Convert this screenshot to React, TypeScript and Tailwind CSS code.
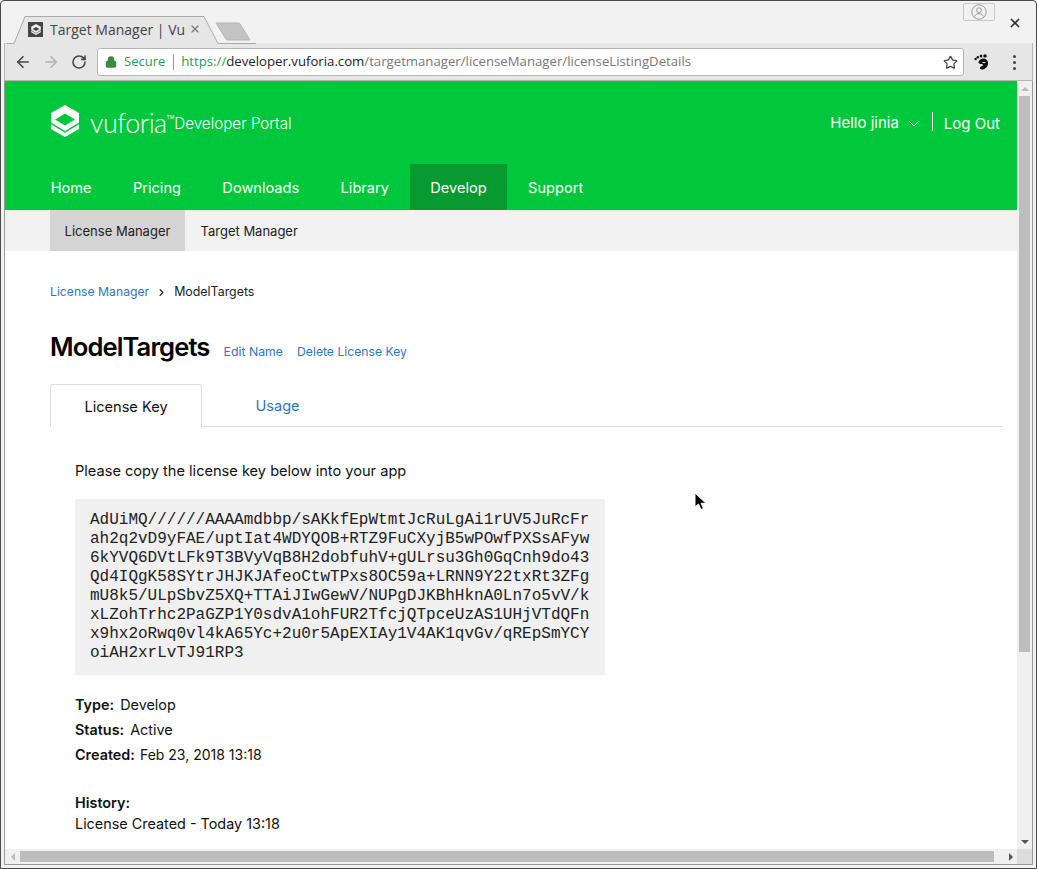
import React from 'react';
import { ArrowLeft, ArrowRight, RotateCw, Lock, Star, X, ChevronDown, ChevronRight } from 'lucide-react';

const LICENSE_KEY = [
  'AdUiMQ//////AAAAmdbbp/sAKkfEpWtmtJcRuLgAi1rUV5JuRcFr',
  'ah2q2vD9yFAE/uptIat4WDYQOB+RTZ9FuCXyjB5wPOwfPXSsAFyw',
  '6kYVQ6DVtLFk9T3BVyVqB8H2dobfuhV+gULrsu3Gh0GqCnh9do43',
  'Qd4IQgK58SYtrJHJKJAfeoCtwTPxs8OC59a+LRNN9Y22txRt3ZFg',
  'mU8k5/ULpSbvZ5XQ+TTAiJIwGewV/NUPgDJKBhHknA0Ln7o5vV/k',
  'xLZohTrhc2PaGZP1Y0sdvA1ohFUR2TfcjQTpceUzAS1UHjVTdQFn',
  'x9hx2oRwq0vl4kA65Yc+2u0r5ApEXIAy1V4AK1qvGv/qREpSmYCY',
  'oiAH2xrLvTJ91RP3',
];

const Logo = ({ width, height, fg, bg }: { width: number; height: number; fg: string; bg: string }) => (
  <svg width={width} height={height} viewBox="0 0 28 32">
    <path d="M14 0 28 8v16l-14 8L0 24V8z" fill={fg} />
    <path d="M14 8.5 24 14.5 14 20.5 4 14.5z" fill={bg} />
    <path d="M0 17.5 14 26 28 17.5v1.8L14 27.8 0 19.3z" fill={bg} />
  </svg>
);

const Foot = () => (
  <svg width="15" height="16" viewBox="0 0 15 16" fill="#111">
    <path d="M9 4.5c3.5 0 5.5 2.5 5 5.500-.5 3.500-3.500 5.500-6 5.500-1.500 0-2.500-1-2-2 .5-1.200 2.500-1.200 3-2.300.3-.8-1-1-2.500-1.200C4.500 9.700 4 8.500 5 7c.8-1.500 2.300-2.500 4-2.500z" />
    <path d="M8 8.500c1.500-.8 3.200-.6 3.700.1-.6.8-2.500 1-3.700-.1z" fill="#e6e6e6" />
    <circle cx="1.600" cy="5" r="1.200" />
    <circle cx="3.800" cy="3.200" r="1.200" />
    <ellipse cx="7" cy="2" rx="1.300" ry="1.500" />
    <ellipse cx="11" cy="1.900" rx="1.800" ry="1.700" />
  </svg>
);

const ProfileIcon = () => (
  <svg width="16" height="16" viewBox="0 0 16 16" fill="none" stroke="#9a9a9a" strokeWidth="1">
    <circle cx="8" cy="8" r="7.2" />
    <circle cx="8" cy="6.200" r="2.400" />
    <path d="M3.800 12.500c.4-2 2-2.800 4.200-2.800s3.800.8 4.200 2.800" />
  </svg>
);

const App: React.FC = () => {
  const nav = ['Home', 'Pricing', 'Downloads', 'Library', 'Develop', 'Support'];

  return (
    <div className="w-[1037px] h-[869px] overflow-hidden flex flex-col bg-[#f2f2f2] border border-[#4a4a4a] rounded-t-[4px] font-['Inter','Noto_Sans',sans-serif] text-[#111]">
      {/* tab strip */}
      <div className="relative h-[42px] shrink-0 flex items-end pl-[27px]">
        <svg className="absolute left-[5px] top-[14px]" width="250" height="30" viewBox="0 0 250 30">
          <path d="M0.5 28.5H8L19 1.5H198L212 28.5H250" fill="#e6e6e6" stroke="#a9a9a9" />
          <path d="M210 8H232a2 2 0 0 1 2 1L244 25H222a3 3 0 0 1-2-1z" fill="#c4c4c4" stroke="#b2b2b2" />
        </svg>
        <div className="relative flex items-center h-[29px] w-[175px] pt-[1px]">
          <div className="w-[15px] h-[15px] bg-[#444] flex items-center justify-center">
            <Logo width={10} height={11} fg="#eee" bg="#444" />
          </div>
          <span className="ml-[7px] w-[135px] overflow-hidden whitespace-nowrap text-[14px] text-[#444] font-['Open_Sans',sans-serif]">Target Manager | Vu</span>
          <X size={12} strokeWidth={2.4} className="ml-[4px] text-[#777]" />
        </div>
        <div className="absolute right-[41px] top-[2px] w-[32px] h-[18px] border border-[#c8c8c8] rounded-[2px] flex items-center justify-center">
          <ProfileIcon />
        </div>
        <X size={14} strokeWidth={3} className="absolute right-[14px] top-[15px] text-[#333]" />
      </div>

      {/* toolbar */}
      <div className="h-[38px] shrink-0 flex items-center mx-[3px] bg-[#e6e6e6] border-x border-b border-[#b5b5b5] pt-[1px] pl-[9px] pr-[12px]">
        <ArrowLeft size={18} strokeWidth={2.2} className="text-[#444]" />
        <ArrowRight size={18} strokeWidth={2.2} className="ml-[10px] text-[#b4b4b4]" />
        <RotateCw size={16} strokeWidth={2.4} className="ml-[11px] text-[#444]" />
        <div className="ml-[10px] h-[28px] w-[867px] flex items-center bg-white border border-[#b5b5b5] rounded-[3px] whitespace-nowrap font-['Open_Sans',sans-serif]">
          <Lock size={12} strokeWidth={3} className="ml-[7px] text-[#3d8b40]" fill="#3d8b40" />
          <span className="ml-[7px] text-[#1e9c5a] text-[13px]">Secure</span>
          <span className="ml-[8px] h-[16px] border-l border-[#999]" />
          <span className="ml-[7px] text-[#1e9c5a] text-[13.2px]">https://</span>
          <span className="text-[#222] text-[13.2px]">developer.vuforia.com</span>
          <span className="flex-1 text-[#777] text-[13.2px]">/targetmanager/licenseManager/licenseListingDetails</span>
          <Star size={15} strokeWidth={2} className="mr-[5px] text-[#444]" />
        </div>
        <div className="ml-[10px]"><Foot /></div>
        <div className="ml-[24px] flex flex-col gap-[3px]">
          <span className="w-[3px] h-[3px] rounded-full bg-[#444]" />
          <span className="w-[3px] h-[3px] rounded-full bg-[#444]" />
          <span className="w-[3px] h-[3px] rounded-full bg-[#444]" />
        </div>
      </div>

      {/* viewport */}
      <div className="flex-1 min-h-0 mx-[3px] mb-[3px] flex flex-col border-x border-b border-[#9a9a9a]">
        <div className="flex-1 min-h-0 flex">
          <div className="flex-1 min-w-0 overflow-hidden bg-white">
            <header className="h-[129px] bg-[#00c73c] text-white flex flex-col">
              <div className="flex-1 flex items-start pl-[46px] pr-[17px] pt-[24px]">
                <Logo width={28} height={32} fg="#fff" bg="#00c73c" />
                <span className="ml-[11px] mt-[2px] text-[27px] leading-[32px] font-light tracking-[-0.6px] font-['Lato',sans-serif]">vuforia</span>
                <span className="text-[5px] mt-[9px] leading-[6px]">TM</span>
                <span className="ml-[0px] mt-[9px] text-[15.2px] leading-[20px] font-light">Developer Portal</span>
                <div className="ml-auto mt-[8px] flex items-start text-[15px] leading-[20px]">
                  <span>Hello jinia</span>
                  <ChevronDown size={16} strokeWidth={1.5} className="ml-[7px] mt-[3px]" />
                  <span className="ml-[10px] -mt-[1px] h-[19px] border-l border-white" />
                  <span className="ml-[11px] mt-[1px]">Log Out</span>
                </div>
              </div>
              <nav className="flex h-[46px] pl-[25px] text-[14.6px]">
                {nav.map(n => (
                  <div key={n} className={`px-[20.7px] pt-[3px] flex items-center ${n === 'Develop' ? 'bg-[#069a30]' : ''}`}>{n}</div>
                ))}
              </nav>
            </header>
            <div className="h-[41px] bg-[#f1f1f1] flex pl-[45px] text-[13px] text-[#222]">
              <div className="w-[135px] pt-[2px] flex items-center justify-center bg-[#d4d4d4]">License Manager</div>
              <div className="px-[15.5px] pt-[2px] flex items-center">Target Manager</div>
            </div>
            <main className="pl-[45px] pr-[14px]">
              <div className="mt-[32px] flex items-center h-[18px] text-[12.2px] text-[#222]">
                <span className="text-[#2f76c0]">License Manager</span>
                <ChevronRight size={11} strokeWidth={2.6} className="mx-[7px] text-[#222]" />
                <span className="text-[12.4px]">ModelTargets</span>
              </div>
              <div className="mt-[28px] flex items-baseline">
                <h1 className="text-[25.6px] leading-[36px] font-semibold tracking-[-0.9px] text-black">ModelTargets</h1>
                <a className="ml-[14px] text-[12.3px] text-[#2f76c0]">Edit Name</a>
                <a className="ml-[14px] text-[12.2px] text-[#2f76c0]">Delete License Key</a>
              </div>
              <div className="mt-[19px] flex h-[43px] border-b border-[#ddd] text-[14.6px]">
                <div className="w-[152px] h-[43px] pt-[3px] bg-white border border-b-0 border-[#ddd] rounded-t-[3px] flex items-center justify-center">License Key</div>
                <div className="w-[151px] pt-[3px] flex items-center justify-center text-[#2f76c0]">Usage</div>
              </div>
              <div className="pl-[25px]">
                <p className="mt-[34px] text-[14.6px] leading-[20px]">Please copy the license key below into your app</p>
                <pre className="mt-[18px] w-[530px] h-[176px] bg-[#f0f0f0] pl-[15px] pt-[12px] font-['Liberation_Mono',monospace] text-[16px] leading-[19px] text-[#222]">{LICENSE_KEY.join('\n')}</pre>
                <div className="mt-[17px] text-[14.4px] leading-[25px]">
                  <div><b className="font-semibold mr-[6px]">Type:</b>Develop</div>
                  <div><b className="font-semibold mr-[6px]">Status:</b>Active</div>
                  <div><b className="font-semibold mr-[5px]">Created:</b><span className="text-[14px]">Feb 23, 2018 13:18</span></div>
                </div>
                <div className="mt-[25px] text-[14.4px] leading-[21px]">
                  <div className="font-semibold">History:</div>
                  <div>License Created - Today 13:18</div>
                </div>
              </div>
            </main>
          </div>

          {/* vertical scrollbar */}
          <div className="w-[15px] bg-[#f0f0f0] flex flex-col items-center">
            <div className="h-[15px] flex items-center justify-center">
              <div className="w-0 h-0 border-x-[4px] border-x-transparent border-b-[4px] border-b-[#bbb]" />
            </div>
            <div className="w-[11px] h-[556px] bg-[#bdbdbd]" />
            <div className="mt-auto h-[15px] flex items-center justify-center">
              <div className="w-0 h-0 border-x-[4px] border-x-transparent border-t-[4px] border-t-[#555]" />
            </div>
          </div>
        </div>

        {/* horizontal scrollbar */}
        <div className="h-[15px] shrink-0 flex items-center bg-[#f0f0f0]">
          <div className="w-[15px] flex justify-center">
            <div className="w-0 h-0 border-y-[4px] border-y-transparent border-r-[4px] border-r-[#bbb]" />
          </div>
          <div className="w-[974px] h-[11px] bg-[#bdbdbd]" />
          <div className="ml-auto mr-[4px] w-0 h-0 border-y-[4px] border-y-transparent border-l-[4px] border-l-[#555]" />
          <div className="w-[15px] h-[15px] bg-[#dcdcdc]" />
        </div>
      </div>

      {/* mouse pointer */}
      <svg className="absolute left-[694px] top-[492px]" width="14" height="20" viewBox="0 0 14 20">
        <path d="M1 1v14l3.5-3 2.5 5.500 2.500-1-2.500-5.200H12z" fill="#000" stroke="#fff" strokeWidth="1" />
      </svg>
    </div>
  );
};

export default App;
